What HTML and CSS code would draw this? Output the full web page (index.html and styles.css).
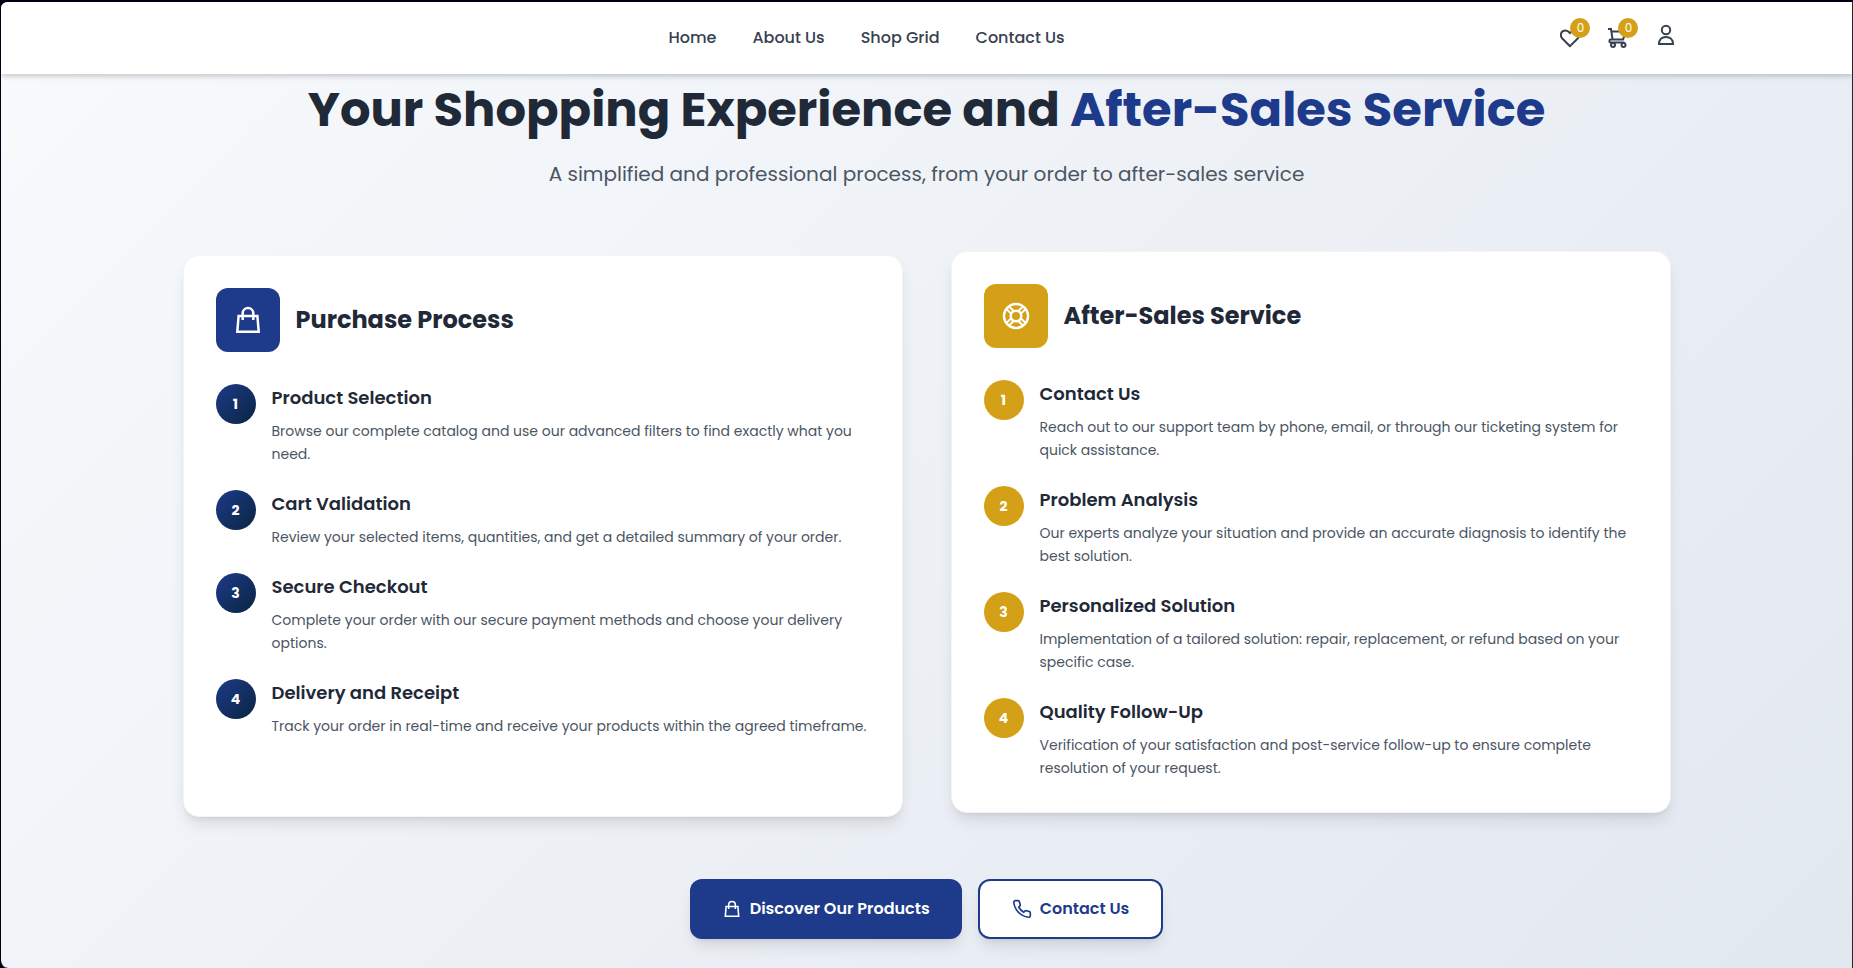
FILE: index.html
```
<!DOCTYPE html>
<html lang="en">
<head>
    <meta charset="UTF-8">
    <meta name="viewport" content="width=device-width, initial-scale=1.0">
    <title>Shopping Experience and After-Sales Service</title>
    <link rel="stylesheet" href="styles.css">
</head>
<body>
    <div class="page">
        <header class="header">
            <div class="header-inner">
                <div class="logo"></div>
                <nav class="nav">
                    <a href="#">Home</a>
                    <a href="#">About Us</a>
                    <a href="#">Shop Grid</a>
                    <a href="#">Contact Us</a>
                </nav>
                <div class="header-icons">
                    <a href="#" class="icon-link" aria-label="Wishlist">
                        <svg width="24" height="24" viewBox="0 0 24 24" fill="none" stroke="currentColor" stroke-width="2"><path d="M12 20.2 L4.3 12.5 C1.9 10 2.6 6.2 5.2 5 C7.5 3.9 10 4.6 12 7 C14 4.6 16.5 3.9 18.8 5 C21.4 6.2 22.1 10 19.7 12.5 Z"/></svg>
                        <span class="badge">0</span>
                    </a>
                    <a href="#" class="icon-link" aria-label="Cart">
                        <svg width="24" height="24" viewBox="0 0 24 24" fill="none" stroke="currentColor" stroke-width="2"><path d="M2 3 H5 L6.6 13.4 H17 L20 5.500 H5.4 M6.600 13.4 H4.500 C3 13.4 3 16.400 4.500 16.400 H18.500"/><circle cx="7" cy="19" r="2"/><circle cx="17.500" cy="19" r="2"/></svg>
                        <span class="badge">0</span>
                    </a>
                    <a href="#" class="user-link" aria-label="Account">
                        <svg width="24" height="24" viewBox="0 0 24 24" fill="none" stroke="currentColor" stroke-width="2"><circle cx="12" cy="7" r="4.2"/><path d="M5 21 C5 16.500 8 14 12 14 C16 14 19 16.500 19 21 Z"/></svg>
                    </a>
                </div>
            </div>
        </header>

        <main class="content">
            <h1 class="title">Your Shopping Experience and <span>After-Sales Service</span></h1>
            <p class="subtitle">A simplified and professional process, from your order to after-sales service</p>

            <div class="cards">
                <section class="card">
                    <div class="card-head">
                        <div class="card-icon blue">
                            <svg width="32" height="32" viewBox="0 0 32 32" fill="none" stroke="currentColor" stroke-width="2.5"><path d="M6.600 12 H25.400 L26.700 27.700 H5.300 Z M10.700 16 V9.300 A5.300 5.300 0 0 1 21.300 9.300 V16"/></svg>
                        </div>
                        <h2>Purchase Process</h2>
                    </div>
                    <ol class="steps">
                        <li><span class="num navy">1</span><div><h3>Product Selection</h3><p>Browse our complete catalog and use our advanced filters to find exactly what you need.</p></div></li>
                        <li><span class="num navy">2</span><div><h3>Cart Validation</h3><p>Review your selected items, quantities, and get a detailed summary of your order.</p></div></li>
                        <li><span class="num navy">3</span><div><h3>Secure Checkout</h3><p>Complete your order with our secure payment methods and choose your delivery options.</p></div></li>
                        <li><span class="num navy">4</span><div><h3>Delivery and Receipt</h3><p>Track your order in real-time and receive your products within the agreed timeframe.</p></div></li>
                    </ol>
                </section>

                <section class="card lifted">
                    <div class="card-head">
                        <div class="card-icon gold">
                            <svg width="32" height="32" viewBox="0 0 32 32" fill="none" stroke="currentColor" stroke-width="2.5">
                                <circle cx="16" cy="16" r="12"/>
                                <circle cx="16" cy="16" r="5.3"/>
                                <path stroke-width="2" d="M6.2 8.800 L11 13.600 M8.800 6.200 L13.600 11 M25.800 8.800 L21 13.600 M23.200 6.200 L18.400 11 M6.200 23.200 L11 18.400 M8.800 25.800 L13.600 21 M25.800 23.200 L21 18.400 M23.200 25.800 L18.400 21"/>
                            </svg>
                        </div>
                        <h2>After-Sales Service</h2>
                    </div>
                    <ol class="steps">
                        <li><span class="num gold">1</span><div><h3>Contact Us</h3><p>Reach out to our support team by phone, email, or through our ticketing system for quick assistance.</p></div></li>
                        <li><span class="num gold">2</span><div><h3>Problem Analysis</h3><p>Our experts analyze your situation and provide an accurate diagnosis to identify the best solution.</p></div></li>
                        <li><span class="num gold">3</span><div><h3>Personalized Solution</h3><p>Implementation of a tailored solution: repair, replacement, or refund based on your specific case.</p></div></li>
                        <li><span class="num gold">4</span><div><h3>Quality Follow-Up</h3><p>Verification of your satisfaction and post-service follow-up to ensure complete resolution of your request.</p></div></li>
                    </ol>
                </section>
            </div>

            <div class="actions">
                <a href="#" class="btn primary">
                    <svg width="20" height="20" viewBox="0 0 32 32" fill="none" stroke="currentColor" stroke-width="2.5"><path d="M6.600 12 H25.400 L26.700 27.700 H5.300 Z M10.700 16 V9.300 A5.300 5.300 0 0 1 21.300 9.300 V16"/></svg>
                    Discover Our Products
                </a>
                <a href="#" class="btn outline">
                    <svg width="20" height="20" viewBox="0 0 24 24" fill="none" stroke="currentColor" stroke-width="2"><path d="M22 16.9v3a2 2 0 0 1-2.2 2 19.8 19.8 0 0 1-8.6-3.1 19.5 19.5 0 0 1-6-6A19.8 19.8 0 0 1 2.1 4.2 2 2 0 0 1 4.1 2h3a2 2 0 0 1 2 1.7c.1 1 .4 1.9.7 2.8a2 2 0 0 1-.5 2.1L8.1 9.9a16 16 0 0 0 6 6l1.3-1.3a2 2 0 0 1 2.1-.4c.9.3 1.8.6 2.8.7A2 2 0 0 1 22 16.9z"/></svg>
                    Contact Us
                </a>
            </div>
        </main>
    </div>
</body>
</html>
```
FILE: styles.css
```
* {
    box-sizing: border-box;
    margin: 0;
    padding: 0;
}
body {
    font-family: Poppins, Inter, sans-serif;
    font-size: 16px;
    line-height: 24px;
    color: #1f2937;
    background-color: #020014;
}
a {
    color: inherit;
    text-decoration: none;
}
.page {
    min-height: 100vh;
    border: 1px solid #020014;
    border-top-width: 2px;
    border-right-color: #1e293b;
    border-bottom: none;
    border-radius: 8px 0 0 8px;
    background: linear-gradient(135deg, #f8fafc, #e2e8f0);
    background-origin: border-box;
    overflow: hidden;
}
.header {
    background-color: #ffffff;
    box-shadow: 0 4px 6px -1px rgba(0, 0, 0, 0.1), 0 2px 4px rgba(0, 0, 0, 0.1);
}
.header-inner {
    display: flex;
    justify-content: space-between;
    align-items: center;
    height: 72px;
    max-width: 1536px;
    margin: 0 auto;
    padding: 0 16px;
    color: #374151;
}
.nav {
    display: flex;
    gap: 36px;
    font-weight: 500;
}
.header-icons {
    display: flex;
    align-items: center;
    gap: 24px;
}
.icon-link {
    position: relative;
    display: flex;
}
.badge {
    position: absolute;
    top: -8px;
    right: -8px;
    width: 20px;
    height: 20px;
    border-radius: 50%;
    background-color: #d4a017;
    color: #ffffff;
    font-size: 12px;
    line-height: 20px;
    text-align: center;
}
.content {
    max-width: 1536px;
    margin: 0 auto;
    padding: 6px 24px 24px;
}
.title {
    font-size: 48px;
    line-height: 60px;
    text-align: center;
}
.title span {
    color: #1e3a8a;
}
.subtitle {
    margin-top: 20px;
    font-size: 20px;
    line-height: 28px;
    text-align: center;
    color: #4b5563;
}
.cards {
    display: grid;
    grid-template-columns: 1fr 1fr;
    gap: 48px;
    margin-top: 67px;
}
.card {
    padding: 32px;
    border: 1px solid #f3f4f6;
    border-radius: 16px;
    background-color: #ffffff;
    box-shadow: 0 10px 15px -3px rgba(0, 0, 0, 0.1), 0 4px 6px -4px rgba(0, 0, 0, 0.1);
}
.card.lifted {
    transform: translateY(-4px);
}
.card-head {
    display: flex;
    align-items: center;
    gap: 16px;
    margin-bottom: 32px;
}
.card-head h2 {
    font-size: 24px;
    line-height: 32px;
}
.card-icon {
    display: flex;
    justify-content: center;
    align-items: center;
    width: 64px;
    height: 64px;
    border-radius: 12px;
    color: #ffffff;
}
.blue {
    background-color: #1e3a8a;
}
.gold {
    background-color: #d4a017;
}
.navy {
    background: linear-gradient(135deg, #1e3a8a, #0a2540);
}
.steps {
    display: flex;
    flex-direction: column;
    gap: 24px;
    list-style: none;
}
.steps li {
    display: flex;
    gap: 16px;
}
.steps h3 {
    margin-bottom: 8px;
    font-size: 18px;
    line-height: 28px;
    font-weight: 600;
}
.steps p {
    font-size: 14px;
    line-height: 23px;
    color: #4b5563;
}
.num {
    flex: none;
    width: 40px;
    height: 40px;
    border-radius: 50%;
    color: #ffffff;
    font-size: 14px;
    font-weight: 700;
    line-height: 40px;
    text-align: center;
}
.actions {
    display: flex;
    justify-content: center;
    gap: 16px;
    margin-top: 62px;
}
.btn {
    display: flex;
    align-items: center;
    gap: 8px;
    height: 60px;
    padding: 0 32px;
    border-radius: 12px;
    font-weight: 600;
    box-shadow: 0 10px 15px -3px rgba(0, 0, 0, 0.1), 0 4px 6px -4px rgba(0, 0, 0, 0.1);
}
.primary {
    background-color: #1e3a8a;
    color: #ffffff;
}
.outline {
    border: 2px solid #1e3a8a;
    background-color: #ffffff;
    color: #1e3a8a;
}
```
